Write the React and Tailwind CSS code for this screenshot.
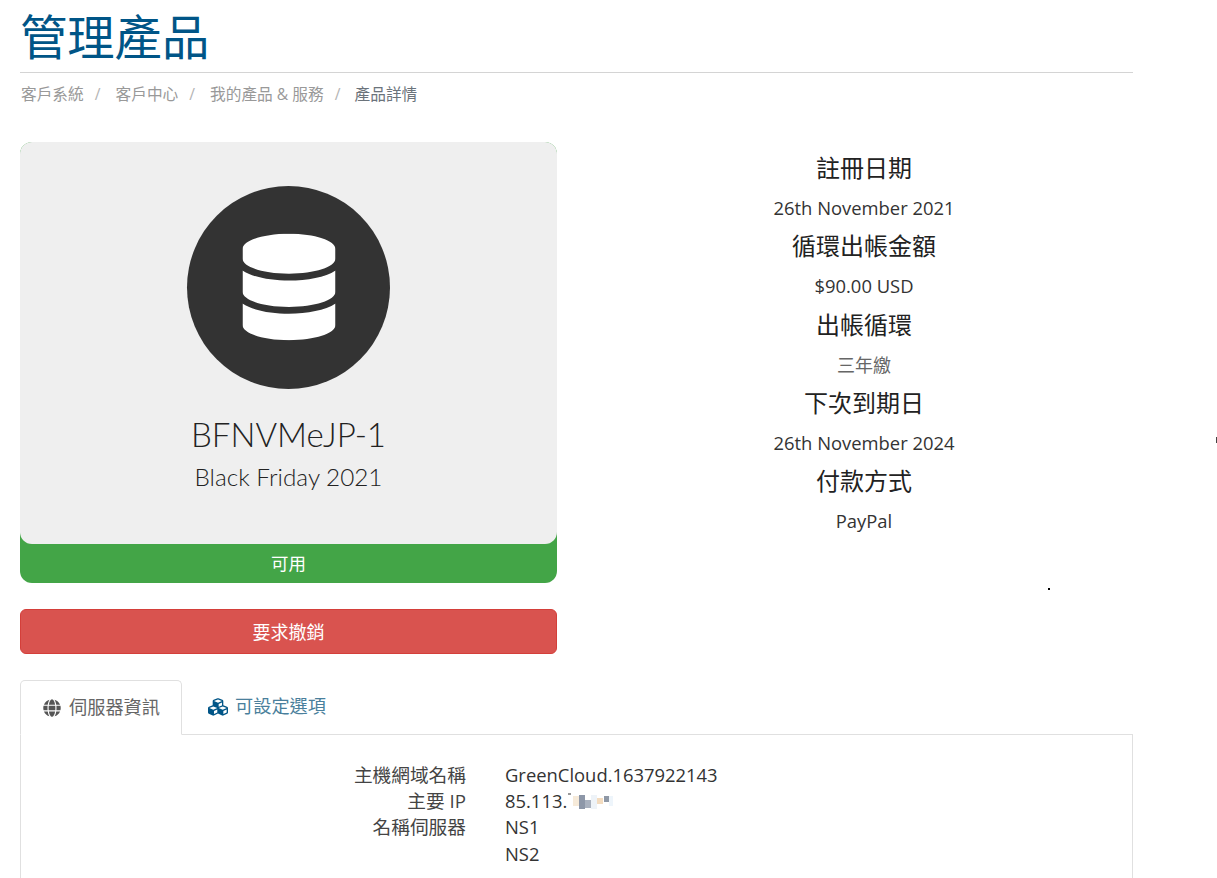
import React from 'react';
import { FaDatabase, FaGlobe, FaCubes } from 'react-icons/fa';

const stats = [
  { label: '註冊日期', value: '26th November 2021' },
  { label: '循環出帳金額', value: '$90.00 USD' },
  { label: '出帳循環', value: '三年繳', cjk: true },
  { label: '下次到期日', value: '26th November 2024' },
  { label: '付款方式', value: 'PayPal' },
];

const crumbs = ['客戶系統', '客戶中心', '我的產品 & 服務'];

// the address is pixelated in the picture
const BlurredIp = () => (
  <span className="inline-flex items-center h-[18px] ml-[1px]">
    <span className="w-[3px] h-[2px] bg-[#9a9a9a] self-start mt-[1px]"></span>
    <span className="w-[6px] h-[10px] bg-[#f6ead9] ml-[2px]"></span>
    <span className="w-[6px] h-[14px] bg-[#8d97a8] mt-[2px]"></span>
    <span className="w-[6px] h-[8px] bg-[#a9b1be] mt-[6px]"></span>
    <span className="w-[6px] h-[14px] bg-[#eef3f8] mt-[2px]"></span>
    <span className="w-[6px] h-[6px] bg-[#f3dcc0]"></span>
    <span className="w-[5px] h-[6px] bg-[#8f98a6] ml-[1px] mb-[4px]"></span>
    <span className="w-[4px] h-[10px] bg-[#eef5fb]"></span>
  </span>
);

const App = () => {
  return (
    <div className="relative h-screen overflow-hidden bg-white text-[#333] font-['Open_Sans','Noto_Sans_CJK_TC',sans-serif]">
      <div className="w-[1113px] ml-[20px]">
        {/* Header */}
        <h1 className="h-[73px] pt-[7px] border-b border-[#d4d4d4] text-[47.3px] leading-[60px] font-normal text-[#005587]">
          管理產品
        </h1>
        <div className="flex items-center h-[20px] mt-[12px] text-[15.7px] text-[#999]">
          {crumbs.map((c) => (
            <React.Fragment key={c}>
              <span className="ml-[1px]">{c}</span>
              <span className="ml-[11px] mr-[14px] text-[#b5b5b5]">/</span>
            </React.Fragment>
          ))}
          <span className="text-[#6b737b]">產品詳情</span>
        </div>

        {/* Product */}
        <div className="flex mt-[37px]">
          <div className="w-[537px]">
            <div className="rounded-[12px] bg-[#43a547] h-[441px] overflow-hidden">
              <div className="h-[402px] bg-[#efefef] rounded-b-[12px] flex flex-col items-center">
                <div className="w-[203px] h-[203px] mt-[44px] rounded-full bg-[#333] flex items-center justify-center">
                  <FaDatabase className="text-white w-[93px] h-[107px] translate-x-[0.5px] -translate-y-[0.5px]" />
                </div>
                <div className="mt-[25px] text-[33px] leading-[40px] font-['Lato','Open_Sans',sans-serif] font-light text-[#222]">BFNVMeJP-1</div>
                <div className="mt-[7px] text-[24.3px] leading-[32px] font-['Lato','Open_Sans',sans-serif] font-light text-[#222]">Black Friday 2021</div>
              </div>
              <div className="h-[39px] flex items-center justify-center text-[17.5px] text-white">可用</div>
            </div>
            <button className="block w-full h-[45px] mt-[26px] pt-[1px] rounded-[6px] bg-[#d9534f] border border-[#d43f3a] text-[18px] text-white">
              要求撤銷
            </button>
          </div>

          <div className="w-[576px] pl-[38px] flex flex-col items-center">
            {stats.map((s) => (
              <div key={s.label} className="w-full h-[78.3px] text-center pt-[10px]">
                <div className="text-[24px] leading-[32px] text-[#222]">{s.label}</div>
                <div className={s.cjk ? 'mt-[12px] text-[18px] leading-[24px] text-[#666]' : 'mt-[12px] text-[18.4px] leading-[24px]'}>{s.value}</div>
              </div>
            ))}
          </div>
        </div>

        {/* Tabs */}
        <div className="flex items-end h-[55px] mt-[26px] border-b border-[#e0e0e0]">
          <div className="w-[162px] h-[55px] -mb-[1px] pl-[1px] flex items-center justify-center gap-[8px] bg-white border border-[#e0e0e0] border-b-white rounded-t-[5px] text-[18.2px] text-[#666]">
            <FaGlobe className="w-[18px] h-[18px] text-[#555]" />
            <span>伺服器資訊</span>
          </div>
          <div className="h-[54px] ml-[26px] flex items-center gap-[7px] text-[18.2px] text-[#4a7f9c]">
            <FaCubes className="w-[20px] h-[20px] text-[#005587]" />
            <span>可設定選項</span>
          </div>
        </div>

        {/* Server info */}
        <div className="h-[300px] border-x border-[#e0e0e0] pt-[27px]">
          <div className="grid grid-cols-[445px_1fr] gap-x-[39px] text-[18.4px] leading-[26.2px]">
            <div className="text-right text-[18.7px] text-[#444]">主機網域名稱</div>
            <div>GreenCloud.1637922143</div>
            <div className="text-right text-[18.7px] text-[#444]">主要 IP</div>
            <div className="flex items-center">85.113.<BlurredIp /></div>
            <div className="text-right text-[18.7px] text-[#444]">名稱伺服器</div>
            <div>NS1</div>
            <div></div>
            <div>NS2</div>
          </div>
        </div>
      </div>

      {/* specks that sit on the picture */}
      <span className="absolute left-[1048px] top-[588px] w-[2px] h-[2px] bg-black"></span>
      <span className="absolute left-[1216px] top-[437px] w-[1px] h-[6px] bg-[#444]"></span>
    </div>
  );
};

export default App;
